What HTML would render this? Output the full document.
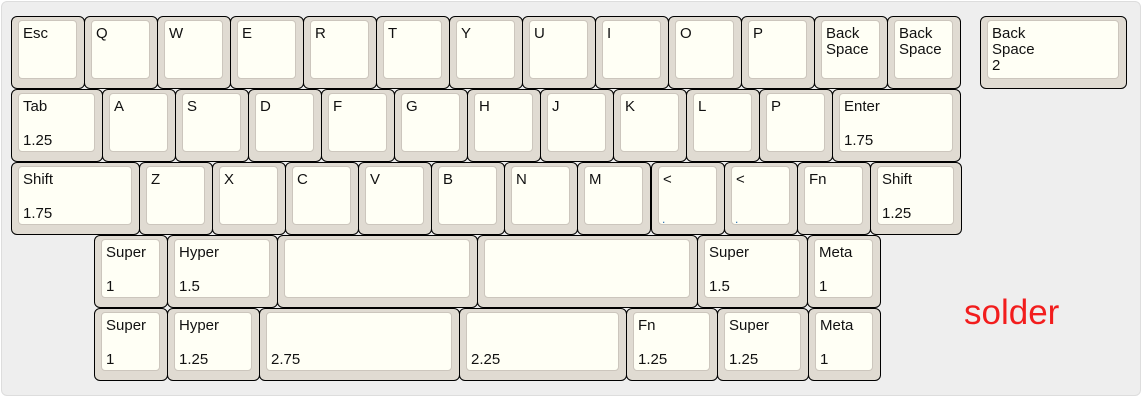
<!DOCTYPE html>
<html><head><meta charset="utf-8"><style>
body{margin:0;width:1143px;height:400px;background:#fff;position:relative;overflow:hidden;font-family:"Liberation Sans",Arial,sans-serif}
.panel{position:absolute;left:1px;top:1px;width:1138px;height:393px;background:#eeeeee;border:1px solid #ddd;border-radius:6px}
.k{position:absolute;height:73px;box-sizing:border-box;border:1px solid #000;border-radius:6px;background:#e0dbd2}
.k i{position:absolute;left:6px;top:3px;right:7px;bottom:9px;background:#fffff5;border:1px solid #ccc6bd;border-radius:4px;font-style:normal}
.t{position:absolute;left:4px;top:5px;font-size:15px;line-height:16px;color:#111}
.b{position:absolute;left:4px;bottom:2px;font-size:15px;line-height:16px;color:#111}
.d{position:absolute;left:3px;bottom:-2px;font-size:12px;color:#2a6fb0}
.solder{position:absolute;left:964px;top:293px;font-size:35px;color:#f21d1d}
</style></head><body>
<div class="panel"></div>
<div class="k" style="left:11px;top:16px;width:74px"><i><span class="t">Esc</span></i></div>
<div class="k" style="left:84px;top:16px;width:74px"><i><span class="t">Q</span></i></div>
<div class="k" style="left:157px;top:16px;width:74px"><i><span class="t">W</span></i></div>
<div class="k" style="left:230px;top:16px;width:74px"><i><span class="t">E</span></i></div>
<div class="k" style="left:303px;top:16px;width:74px"><i><span class="t">R</span></i></div>
<div class="k" style="left:376px;top:16px;width:74px"><i><span class="t">T</span></i></div>
<div class="k" style="left:449px;top:16px;width:74px"><i><span class="t">Y</span></i></div>
<div class="k" style="left:522px;top:16px;width:74px"><i><span class="t">U</span></i></div>
<div class="k" style="left:595px;top:16px;width:74px"><i><span class="t">I</span></i></div>
<div class="k" style="left:668px;top:16px;width:74px"><i><span class="t">O</span></i></div>
<div class="k" style="left:741px;top:16px;width:74px"><i><span class="t">P</span></i></div>
<div class="k" style="left:814px;top:16px;width:74px"><i><span class="t">Back<br>Space</span></i></div>
<div class="k" style="left:887px;top:16px;width:74px"><i><span class="t">Back<br>Space</span></i></div>
<div class="k" style="left:980px;top:16px;width:147px"><i><span class="t">Back<br>Space<br>2</span></i></div>
<div class="k" style="left:11px;top:89px;width:92px"><i><span class="t">Tab</span><span class="b">1.25</span></i></div>
<div class="k" style="left:102px;top:89px;width:74px"><i><span class="t">A</span></i></div>
<div class="k" style="left:175px;top:89px;width:74px"><i><span class="t">S</span></i></div>
<div class="k" style="left:248px;top:89px;width:74px"><i><span class="t">D</span></i></div>
<div class="k" style="left:321px;top:89px;width:74px"><i><span class="t">F</span></i></div>
<div class="k" style="left:394px;top:89px;width:74px"><i><span class="t">G</span></i></div>
<div class="k" style="left:467px;top:89px;width:74px"><i><span class="t">H</span></i></div>
<div class="k" style="left:540px;top:89px;width:74px"><i><span class="t">J</span></i></div>
<div class="k" style="left:613px;top:89px;width:74px"><i><span class="t">K</span></i></div>
<div class="k" style="left:686px;top:89px;width:74px"><i><span class="t">L</span></i></div>
<div class="k" style="left:759px;top:89px;width:74px"><i><span class="t">P</span></i></div>
<div class="k" style="left:832px;top:89px;width:129px"><i><span class="t">Enter</span><span class="b">1.75</span></i></div>
<div class="k" style="left:11px;top:162px;width:129px"><i><span class="t">Shift</span><span class="b">1.75</span></i></div>
<div class="k" style="left:139px;top:162px;width:74px"><i><span class="t">Z</span></i></div>
<div class="k" style="left:212px;top:162px;width:74px"><i><span class="t">X</span></i></div>
<div class="k" style="left:285px;top:162px;width:74px"><i><span class="t">C</span></i></div>
<div class="k" style="left:358px;top:162px;width:74px"><i><span class="t">V</span></i></div>
<div class="k" style="left:431px;top:162px;width:74px"><i><span class="t">B</span></i></div>
<div class="k" style="left:504px;top:162px;width:74px"><i><span class="t">N</span></i></div>
<div class="k" style="left:577px;top:162px;width:74px"><i><span class="t">M</span></i></div>
<div class="k" style="left:651px;top:162px;width:74px"><i><span class="t">&lt;</span><span class="d">.</span></i></div>
<div class="k" style="left:724px;top:162px;width:74px"><i><span class="t">&lt;</span><span class="d">.</span></i></div>
<div class="k" style="left:797px;top:162px;width:74px"><i><span class="t">Fn</span></i></div>
<div class="k" style="left:870px;top:162px;width:92px"><i><span class="t">Shift</span><span class="b">1.25</span></i></div>
<div class="k" style="left:94px;top:235px;width:74px"><i><span class="t">Super</span><span class="b">1</span></i></div>
<div class="k" style="left:167px;top:235px;width:111px"><i><span class="t">Hyper</span><span class="b">1.5</span></i></div>
<div class="k" style="left:277px;top:235px;width:201px"><i></i></div>
<div class="k" style="left:477px;top:235px;width:221px"><i></i></div>
<div class="k" style="left:697px;top:235px;width:111px"><i><span class="t">Super</span><span class="b">1.5</span></i></div>
<div class="k" style="left:807px;top:235px;width:74px"><i><span class="t">Meta</span><span class="b">1</span></i></div>
<div class="k" style="left:94px;top:308px;width:74px"><i><span class="t">Super</span><span class="b">1</span></i></div>
<div class="k" style="left:167px;top:308px;width:93px"><i><span class="t">Hyper</span><span class="b">1.25</span></i></div>
<div class="k" style="left:259px;top:308px;width:201px"><i><span class="b">2.75</span></i></div>
<div class="k" style="left:459px;top:308px;width:168px"><i><span class="b">2.25</span></i></div>
<div class="k" style="left:626px;top:308px;width:92px"><i><span class="t">Fn</span><span class="b">1.25</span></i></div>
<div class="k" style="left:717px;top:308px;width:92px"><i><span class="t">Super</span><span class="b">1.25</span></i></div>
<div class="k" style="left:808px;top:308px;width:73px"><i><span class="t">Meta</span><span class="b">1</span></i></div>
<div class="solder">solder</div>
</body></html>
